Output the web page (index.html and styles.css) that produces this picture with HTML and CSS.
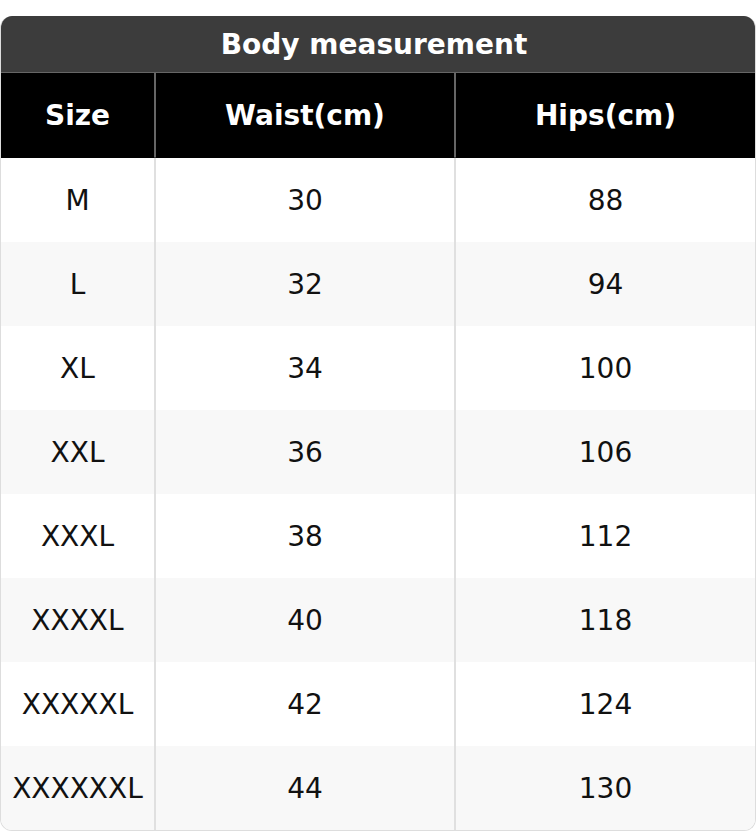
FILE: index.html
```html
<!DOCTYPE html>
<html>
<head>
<meta charset="utf-8">
<link rel="stylesheet" href="styles.css">
</head>
<body>
<div class="sheet">
  <div class="title">Body measurement</div>
  <div class="grid">
    <div class="cell head">Size</div>
    <div class="cell head">Waist(cm)</div>
    <div class="cell head">Hips(cm)</div>

    <div class="cell">M</div><div class="cell">30</div><div class="cell">88</div>
    <div class="cell alt">L</div><div class="cell alt">32</div><div class="cell alt">94</div>
    <div class="cell">XL</div><div class="cell">34</div><div class="cell">100</div>
    <div class="cell alt">XXL</div><div class="cell alt">36</div><div class="cell alt">106</div>
    <div class="cell">XXXL</div><div class="cell">38</div><div class="cell">112</div>
    <div class="cell alt">XXXXL</div><div class="cell alt">40</div><div class="cell alt">118</div>
    <div class="cell">XXXXXL</div><div class="cell">42</div><div class="cell">124</div>
    <div class="cell alt">XXXXXXL</div><div class="cell alt">44</div><div class="cell alt">130</div>
  </div>
</div>
</body>
</html>
```

FILE: styles.css
```css
html, body {
  margin: 0;
  padding: 0;
  background: #ffffff;
}

body {
  font-family: "DejaVu Sans", "Liberation Sans", sans-serif;
}

.sheet {
  margin-top: 16px;
  width: 756px;
  box-sizing: border-box;
  border: 1px solid #dddddd;
  border-top: none;
  border-radius: 12px;
  overflow: hidden;
}

.title {
  height: 56px;
  background: #3c3c3c;
  color: #ffffff;
  font-weight: bold;
  font-size: 28px;
  display: flex;
  align-items: center;
  justify-content: center;
  border-bottom: 1px solid #666666;
  margin: 0 -1px;
  padding-right: 8px;
}

.grid {
  display: grid;
  grid-template-columns: 154px 300px 300px;
  grid-auto-rows: 84px;
  grid-template-rows: 85px;
}

.cell {
  display: flex;
  align-items: center;
  justify-content: center;
  font-size: 28px;
  color: #111111;
  background: #ffffff;
  box-sizing: border-box;
  border-left: 1px solid #e0e0e0;
  border-right: 1px solid #e0e0e0;
}

.cell:nth-child(3n+1) {
  border-left: none;
}

.cell:nth-child(3n) {
  border-right: none;
}

.cell.alt {
  background: #f8f8f8;
}

.cell.head {
  background: #000000;
  color: #ffffff;
  font-weight: bold;
  border-left-color: #666666;
  border-right-color: #666666;
  border-bottom: 1px solid #000000;
}
```
